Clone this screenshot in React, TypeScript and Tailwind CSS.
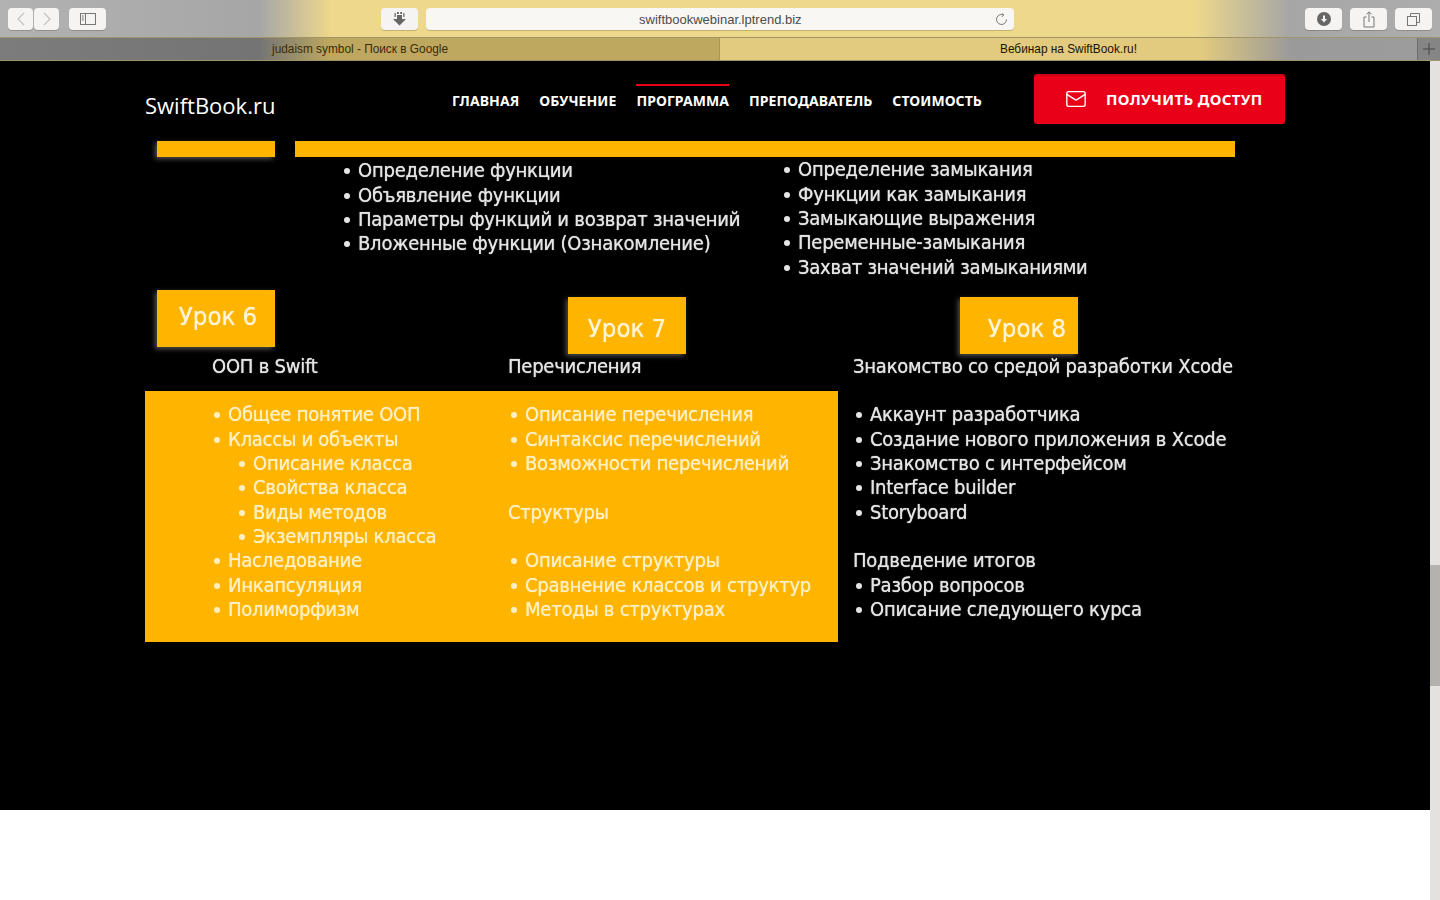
import React from "react";
import { Mail } from "lucide-react";

function Li({ children, sub }: { children: React.ReactNode; sub?: boolean }) {
  return (
    <div className={sub ? "flex h-[24.35px] items-center whitespace-nowrap pl-[25px]" : "flex h-[24.35px] items-center whitespace-nowrap"}>
      <span className="flex w-[15px] shrink-0 items-center">
        <span className="ml-px mt-[2px] h-[6px] w-[6px] rounded-full bg-current" />
      </span>
      <span>{children}</span>
    </div>
  );
}

function Chip({ label, className }: { label: string; className: string }) {
  return (
    <div className={"flex h-[57px] w-[118px] shrink-0 items-center justify-center bg-[#ffb400] text-[25.500px] tracking-normal text-[#fff4d6] shadow-[-2px_2px_5px_rgba(255,255,255,0.32)] " + className}>
      {label}
    </div>
  );
}

function ToolBtn({ w, children }: { w: string; children: React.ReactNode }) {
  return (
    <div className={"flex h-[22px] shrink-0 items-center justify-center rounded-[4px] bg-[#f5f4f2] shadow-[0_1px_0_rgba(0,0,0,0.18)] " + w}>
      {children}
    </div>
  );
}

export default function App() {
  return (
    <div className="flex h-[900px] w-[1440px] flex-col overflow-hidden bg-white font-['Liberation_Sans',sans-serif]">
      {/* Safari toolbar */}
      <div className="flex h-[38px] shrink-0 items-center border-b border-[#a09468] bg-[linear-gradient(90deg,#b2b2b2_0%,#a6a6a6_18%,#eed88c_23%,#eed88c_50%,#eed88c_83%,#a6a6a6_89.500%,#adadad_100%)] pl-[8px] pr-[8px] pt-[1px]">
        <div className="flex gap-px">
          <ToolBtn w="w-[25px]">
            <svg width="12" height="14" viewBox="0 0 12 14" fill="none" stroke="#c4c4c4" strokeWidth="1.3"><path d="M9 1 3 7l6 6" /></svg>
          </ToolBtn>
          <ToolBtn w="w-[25px]">
            <svg width="12" height="14" viewBox="0 0 12 14" fill="none" stroke="#c4c4c4" strokeWidth="1.3"><path d="m3 1 6 6-6 6" /></svg>
          </ToolBtn>
        </div>
        <div className="ml-[10px]">
          <ToolBtn w="w-[37px]">
            <svg width="16" height="12" viewBox="0 0 16 12" fill="none" stroke="#777" strokeWidth="1"><rect x="0.5" y="0.5" width="15" height="11" /><path d="M5.5 0.5v11M1.800 3h2M1.800 5h2M1.800 7h2" /></svg>
          </ToolBtn>
        </div>
        <div className="ml-[275px]">
          <ToolBtn w="w-[37px]">
            <svg width="15" height="14" viewBox="0 0 15 14" fill="#666"><path d="M5 3h5v4h4l-6.500 6.500L1 7h4z" /><path d="M2.500 1h1.200v4H2.500zM11.300 1h1.200v4h-1.200zM5 0h1.800v2H5zM8.200 0H10v2H8.200z" /></svg>
          </ToolBtn>
        </div>
        <div className="ml-[8px] flex h-[22px] w-[588px] shrink-0 items-center rounded-[4px] bg-[#f8f7f4] pl-[213px] pr-[6px] text-[13px] text-[#4c4c4c] shadow-[0_1px_0_rgba(0,0,0,0.18)]">
          <span className="flex-1 whitespace-nowrap pt-[1px]">swiftbookwebinar.lptrend.biz</span>
          <svg width="13" height="13" viewBox="0 0 13 13" fill="none" stroke="#777" strokeWidth="1"><path d="M11.500 6.500a5 5 0 1 1-3-4.600" /><path d="M6.800 0.300 8.800 2 7 3.800" /></svg>
        </div>
        <div className="ml-auto flex gap-[8px]">
          <ToolBtn w="w-[37px]">
            <svg width="14" height="14" viewBox="0 0 14 14"><circle cx="7" cy="7" r="7" fill="#666" /><path d="M6 3.500h2V7h2L7 10.500 4 7h2z" fill="#f5f4f2" /></svg>
          </ToolBtn>
          <ToolBtn w="w-[37px]">
            <svg width="12" height="17" viewBox="0 0 12 17" fill="none" stroke="#777" strokeWidth="1"><path d="M3.500 6H1v10h10V6H8.500M6 11V1M3.500 3.300 6 0.800l2.500 2.500" /></svg>
          </ToolBtn>
          <ToolBtn w="w-[37px]">
            <svg width="13" height="13" viewBox="0 0 13 13" fill="none" stroke="#777" strokeWidth="1"><path d="M3.500 3V0.500h9v9H10" /><rect x="0.500" y="3.500" width="9" height="9" /></svg>
          </ToolBtn>
        </div>
      </div>

      {/* Tabs */}
      <div className="flex h-[23px] shrink-0 border-b border-[#a09468] text-[11.850px] text-[#1c1400]">
        <div className="flex w-[719px] shrink-0 items-center bg-[linear-gradient(90deg,#7c7c7c_0%,#747474_36%,#bea85f_46%,#bea85f_100%)] pl-[272px] pt-[2px] text-[#3a2c08]">
          judaism symbol - Поиск в Google
        </div>
        <div className="flex w-[698px] shrink-0 items-center border-l border-[#a89458] bg-[linear-gradient(90deg,#e2ca7f_0%,#e2ca7f_69%,#9a9a9a_82%,#9c9c9c_100%)] pl-[280px] pt-[2px]">
          Вебинар на SwiftBook.ru!
        </div>
        <div className="flex flex-1 items-center justify-center border-l border-[#6e6e6e] bg-[#858585]">
          <svg width="12" height="12" viewBox="0 0 12 12" stroke="#444" strokeWidth="1"><path d="M6 0v12M0 6h12" /></svg>
        </div>
      </div>

      <div className="flex min-h-0 flex-1">
        <main className="flex min-w-0 flex-1 flex-col">
          <div className="flex h-[749px] shrink-0 flex-col bg-black">
            {/* Site header */}
            <header className="flex h-[80px] shrink-0 pl-[145px] pt-[13px] font-['Open_Sans',sans-serif] text-white">
              <div className="mt-[15px] w-[307px] shrink-0 text-[22px] leading-[32px]">SwiftBook.ru</div>
              <nav className="flex w-[530px] shrink-0 gap-[20px] pt-[10px] font-['Noto_Sans',sans-serif] text-[14px] font-bold tracking-[0.07px]">
                <a className="border-t-2 border-transparent pt-[5px] leading-[20px]">ГЛАВНАЯ</a>
                <a className="border-t-2 border-transparent pt-[5px] leading-[20px]">ОБУЧЕНИЕ</a>
                <a className="h-[34px] border-t-2 border-[#e90018] pt-[5px] leading-[20px]">ПРОГРАММА</a>
                <a className="border-t-2 border-transparent pt-[5px] leading-[20px]">ПРЕПОДАВАТЕЛЬ</a>
                <a className="border-t-2 border-transparent pt-[5px] leading-[20px]">СТОИМОСТЬ</a>
              </nav>
              <button className="ml-[52px] flex h-[50px] w-[251px] shrink-0 items-center rounded-[3px] border-t-2 border-[#c90016] bg-[#e90018] pb-[2px] pl-[31px] font-['Noto_Sans',sans-serif] text-[15px] font-bold tracking-[0.36px] text-white">
                <Mail size={22} strokeWidth={1.5} />
                <span className="ml-[19px]">ПОЛУЧИТЬ ДОСТУП</span>
              </button>
            </header>

            {/* Slide */}
            <section className="ml-[145px] w-[1090px] font-['DejaVu_Sans_Condensed','DejaVu_Sans',sans-serif] text-[20px] tracking-[-0.23px] text-[#e4e4e4] blur-[0.4px] [text-shadow:0_0_1px_currentColor]">
              <div className="flex h-[16px] pl-[12px]">
                <div className="w-[118px] bg-[#ffb400] shadow-[-2px_2px_5px_rgba(255,255,255,0.32)]" />
                <div className="ml-[20px] flex-1 bg-[#ffb400]" />
              </div>

              <div className="flex h-[133px] pl-[198px]">
                <div className="w-[440px] shrink-0 pt-[1px]">
                  <Li>Определение функции</Li>
                  <Li>Объявление функции</Li>
                  <Li>Параметры функций и возврат значений</Li>
                  <Li>Вложенные функции (Ознакомление)</Li>
                </div>
                <div>
                  <Li>Определение замыкания</Li>
                  <Li>Функции как замыкания</Li>
                  <Li>Замыкающие выражения</Li>
                  <Li>Переменные-замыкания</Li>
                  <Li>Захват значений замыканиями</Li>
                </div>
              </div>

              <div className="flex h-[64px] pl-[12px]">
                <Chip label="Урок 6" className="pb-[4px] pl-[4px]" />
                <Chip label="Урок 7" className="ml-[293px] mt-[7px] pt-[6px]" />
                <Chip label="Урок 8" className="ml-[274px] mt-[7px] pl-[16px] pt-[6px]" />
              </div>

              <div className="flex h-[37px] items-start whitespace-nowrap">
                <div className="w-[363px] shrink-0 pl-[67px] leading-[24px]">ООП в Swift</div>
                <div className="w-[345px] shrink-0 leading-[24px]">Перечисления</div>
                <div className="leading-[24px]">Знакомство со средой разработки Xcode</div>
              </div>

              <div className="flex items-stretch">
                <div className="flex h-[251px] w-[693px] shrink-0 bg-[#ffb400] pt-[11px] text-[#fff0c4]">
                  <div className="w-[365px] shrink-0 pl-[68px]">
                    <Li>Общее понятие ООП</Li>
                    <Li>Классы и объекты</Li>
                    <Li sub>Описание класса</Li>
                    <Li sub>Свойства класса</Li>
                    <Li sub>Виды методов</Li>
                    <Li sub>Экземпляры класса</Li>
                    <Li>Наследование</Li>
                    <Li>Инкапсуляция</Li>
                    <Li>Полиморфизм</Li>
                  </div>
                  <div className="flex-1">
                    <Li>Описание перечисления</Li>
                    <Li>Синтаксис перечислений</Li>
                    <Li>Возможности перечислений</Li>
                    <div className="h-[24.35px]" />
                    <div className="-ml-[2px] flex h-[24.35px] items-center">Структуры</div>
                    <div className="h-[24.35px]" />
                    <Li>Описание структуры</Li>
                    <Li>Сравнение классов и структур</Li>
                    <Li>Методы в структурах</Li>
                  </div>
                </div>
                <div className="ml-[15px] pt-[11px]">
                  <div className="ml-[2px]">
                    <Li>Аккаунт разработчика</Li>
                    <Li>Создание нового приложения в Xcode</Li>
                    <Li>Знакомство с интерфейсом</Li>
                    <Li>Interface builder</Li>
                    <Li>Storyboard</Li>
                  </div>
                  <div className="h-[24.35px]" />
                  <div className="flex h-[24.35px] items-center">Подведение итогов</div>
                  <div className="ml-[2px]">
                    <Li>Разбор вопросов</Li>
                    <Li>Описание следующего курса</Li>
                  </div>
                </div>
              </div>
            </section>
          </div>
        </main>

        {/* Scrollbar */}
        <aside className="w-[10px] shrink-0 bg-[#e3e2e0] pt-[504px]">
          <div className="h-[121px] bg-[#b3b2ae]" />
        </aside>
      </div>
    </div>
  );
}
